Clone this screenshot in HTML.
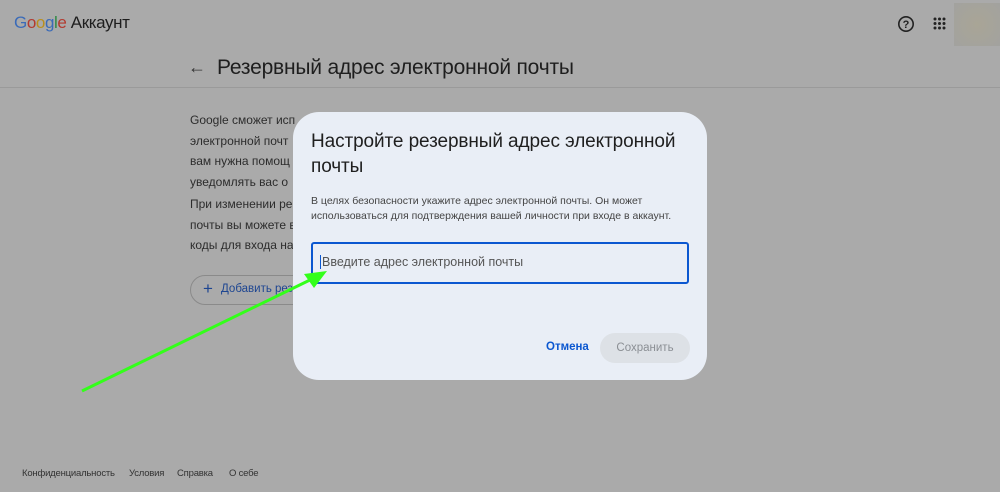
<!DOCTYPE html>
<html><head><meta charset="utf-8"><style>
body{margin:0;width:1000px;height:492px;background:#aaaaaa;font-family:"Liberation Sans",Arial,sans-serif;position:relative;overflow:hidden;color:#1f1f1f}
.a{position:absolute;white-space:nowrap}
.p{color:#2c2c2c;font-size:12px;line-height:20.5px}
.f{position:absolute;top:468px;font-size:9.5px;color:#333;letter-spacing:-0.2px;white-space:nowrap}
</style></head><body>
<div class="a" style="left:14px;top:13px;font-size:17px;letter-spacing:-0.4px"><span style="color:#3b6bb8">G</span><span style="color:#b33a2f">o</span><span style="color:#b98f1e">o</span><span style="color:#3b6bb8">g</span><span style="color:#2e8a45">l</span><span style="color:#b33a2f">e</span> <span style="color:#1e1e1e">Аккаунт</span></div>
<svg class="a" style="left:896px;top:14px" width="20" height="20" viewBox="0 0 20 20"><circle cx="10" cy="10" r="7.2" fill="none" stroke="#222" stroke-width="1.6"/><text x="10" y="14" font-size="11" text-anchor="middle" font-family="Liberation Sans" font-weight="bold" fill="#222">?</text></svg>
<svg class="a" style="left:933px;top:17px" width="13" height="13"><g fill="#222"><circle cx="2" cy="2" r="1.5"/><circle cx="6.5" cy="2" r="1.5"/><circle cx="11" cy="2" r="1.5"/><circle cx="2" cy="6.5" r="1.5"/><circle cx="6.5" cy="6.5" r="1.5"/><circle cx="11" cy="6.5" r="1.5"/><circle cx="2" cy="11" r="1.5"/><circle cx="6.5" cy="11" r="1.5"/><circle cx="11" cy="11" r="1.5"/></g></svg>
<div class="a" style="left:954px;top:3px;width:46px;height:43px;background:radial-gradient(circle,#a9a596,#a2a29f)"></div>
<div class="a" style="left:0;top:87px;width:1000px;height:1px;background:#9a9a9a"></div>
<div class="a" style="left:188px;top:57px;font-size:18px;color:#333">←</div>
<div class="a" style="left:217px;top:56px;font-size:21px;color:#1e1e1e;letter-spacing:-0.2px">Резервный адрес электронной почты</div>
<div class="a p" style="left:190px;top:110px">Google сможет исп<br>электронной почт<br>вам нужна помощ<br>уведомлять вас о</div>
<div class="a p" style="left:190px;top:194px">При изменении ре<br>почты вы можете в<br>коды для входа на</div>
<div class="a" style="left:190px;top:275px;width:140px;height:28px;border:1px solid #8a8a8a;border-radius:15px"></div>
<div class="a" style="left:203px;top:279px;font-size:17px;color:#1d4591">+</div>
<div class="a" style="left:221px;top:283px;font-size:11.5px;color:#1d4591">Добавить рез</div>
<div class="f" style="left:22px">Конфиденциальность</div>
<div class="f" style="left:129px">Условия</div>
<div class="f" style="left:177px">Справка</div>
<div class="f" style="left:229px">О себе</div>
<div class="a" style="left:293px;top:112px;width:414px;height:268px;background:#e9eef6;border-radius:26px"></div>
<div class="a" style="left:311px;top:129px;font-size:19px;line-height:25px;color:#1f1f1f;letter-spacing:-0.1px">Настройте резервный адрес электронной<br>почты</div>
<div class="a" style="left:311px;top:194px;font-size:10.5px;line-height:15px;color:#444">В целях безопасности укажите адрес электронной почты. Он может<br>использоваться для подтверждения вашей личности при входе в аккаунт.</div>
<div class="a" style="left:311px;top:242px;width:374px;height:38px;border:2px solid #0b57d0;border-radius:3px"></div>
<div class="a" style="left:320px;top:255px;font-size:12.5px;color:#555;border-left:1px solid #0b57d0;padding-left:1px;line-height:14px">Введите адрес электронной почты</div>
<div class="a" style="left:546px;top:341px;font-size:11.5px;color:#0b57d0;font-weight:bold">Отмена</div>
<div class="a" style="left:600px;top:333px;width:90px;height:30px;border-radius:15px;background:#dde1e6;color:#8b8f94;font-size:11.5px;text-align:center;line-height:30px">Сохранить</div>
<svg class="a" style="left:0;top:0" width="1000" height="492"><line x1="82" y1="391" x2="312" y2="279" stroke="#33ff1a" stroke-width="3"/><polygon points="327,271 304,274 314,288" fill="#33ff1a"/></svg>
</body></html>
